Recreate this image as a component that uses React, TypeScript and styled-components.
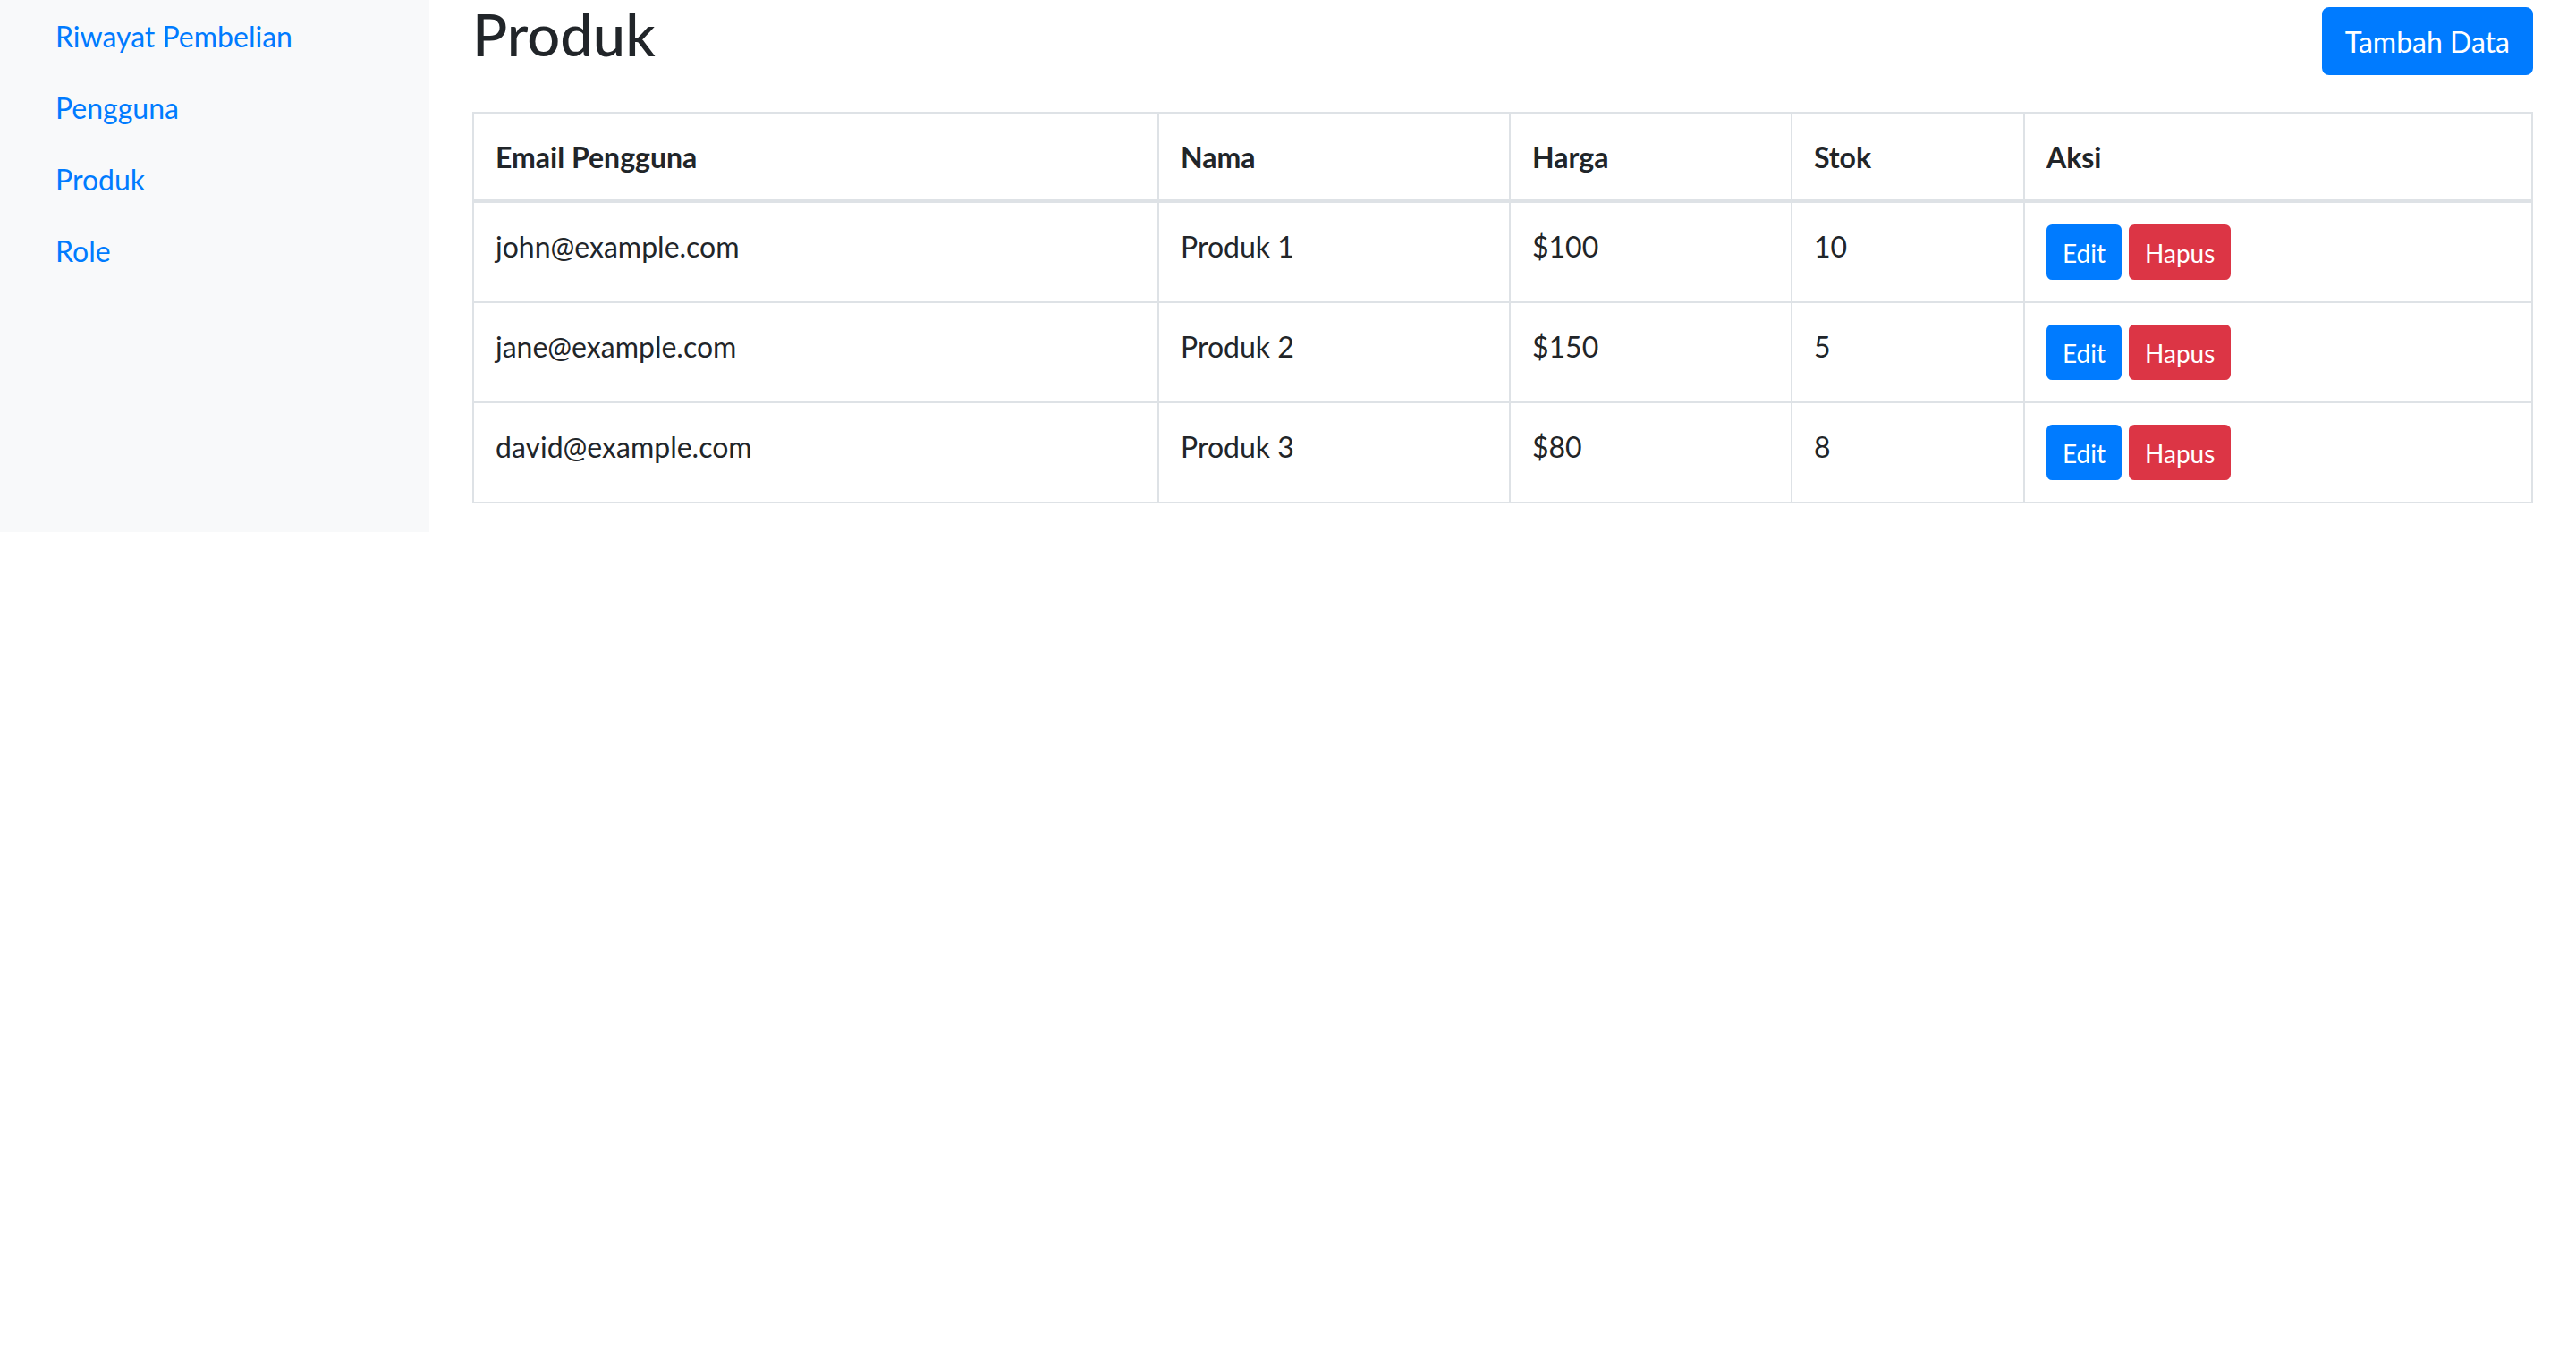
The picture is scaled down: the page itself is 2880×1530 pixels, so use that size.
import React from "react";
import styled, { createGlobalStyle } from "styled-components";

const GlobalStyle = createGlobalStyle`
  html, body {
    margin: 0;
    padding: 0;
    background: #ffffff;
  }
  body {
    font-family: Lato, "Open Sans", "Liberation Sans", sans-serif;
    color: #212529;
    font-size: 32px;
    line-height: 48px;
  }
  * { box-sizing: border-box; }
`;

const Layout = styled.div`
  display: flex;
  align-items: stretch;
  width: 100%;
`;

const Sidebar = styled.nav`
  flex: 0 0 480px;
  width: 480px;
  background: #f8f9fa;
  padding: 0 30px;
`;

const NavList = styled.ul`
  list-style: none;
  margin: 0;
  padding: 0;
  display: flex;
  flex-direction: column;
`;

const NavLink = styled.a`
  display: block;
  padding: 17px 32px 15px;
  font-size: 32px;
  line-height: 48px;
  color: #007bff;
  text-decoration: none;
`;

const Main = styled.main`
  flex: 1 1 auto;
  min-width: 0;
  padding: 0 48px;
`;

const Header = styled.div`
  display: flex;
  justify-content: space-between;
  align-items: flex-start;
  margin-bottom: 32px;
`;

const Title = styled.h2`
  margin: 0 0 16px;
  font-size: 65px;
  font-weight: 500;
  line-height: 76.8px;
  color: #212529;
`;

const AddButton = styled.button`
  margin-top: 8px;
  height: 76px;
  padding: 1px 24px 0;
  font-family: inherit;
  font-size: 32px;
  line-height: 48px;
  font-weight: 400;
  color: #ffffff;
  background: #007bff;
  border: 2px solid #007bff;
  border-radius: 8px;
  cursor: pointer;
`;

const Table = styled.table`
  width: 100%;
  table-layout: fixed;
  border-collapse: collapse;
  border: 2px solid #dee2e6;
  margin-bottom: 32px;
  color: #212529;
`;

const Col = styled.col<{ $w?: number }>`
  width: ${(p) => (p.$w ? `${p.$w}px` : "auto")};
`;

const Th = styled.th`
  padding: 25px 24px 23px;
  border: 2px solid #dee2e6;
  border-bottom-width: 4px;
  text-align: left;
  vertical-align: bottom;
  font-size: 32px;
  line-height: 48px;
  font-weight: 700;
`;

const Td = styled.td`
  padding: 25px 24px 23px;
  border: 2px solid #dee2e6;
  text-align: left;
  vertical-align: top;
  font-size: 32px;
  line-height: 48px;
  font-weight: 400;
`;

const Actions = styled.div`
  display: flex;
  gap: 8px;
  margin: -1px 0 1px;
`;

const ActionButton = styled.button<{ $variant: "primary" | "danger" }>`
  padding: 9px 16px 7px;
  font-family: inherit;
  font-size: 28px;
  line-height: 42px;
  font-weight: 400;
  color: #ffffff;
  background: ${(p) => (p.$variant === "primary" ? "#007bff" : "#dc3545")};
  border: 2px solid ${(p) => (p.$variant === "primary" ? "#007bff" : "#dc3545")};
  border-radius: 6.4px;
  cursor: pointer;
`;

const navItems = ["Riwayat Pembelian", "Pengguna", "Produk", "Role"];

const products = [
  { email: "john@example.com", name: "Produk 1", price: "$100", stock: "10" },
  { email: "jane@example.com", name: "Produk 2", price: "$150", stock: "5" },
  { email: "david@example.com", name: "Produk 3", price: "$80", stock: "8" },
];

export default function App() {
  return (
    <>
      <GlobalStyle />
      <Layout>
        <Sidebar>
          <NavList>
            {navItems.map((item) => (
              <li key={item}>
                <NavLink href="#">{item}</NavLink>
              </li>
            ))}
          </NavList>
        </Sidebar>
        <Main>
          <Header>
            <Title>Produk</Title>
            <AddButton>Tambah Data</AddButton>
          </Header>
          <Table>
            <colgroup>
              <Col $w={766} />
              <Col $w={393} />
              <Col $w={315} />
              <Col $w={260} />
              <Col />
            </colgroup>
            <thead>
              <tr>
                <Th>Email Pengguna</Th>
                <Th>Nama</Th>
                <Th>Harga</Th>
                <Th>Stok</Th>
                <Th>Aksi</Th>
              </tr>
            </thead>
            <tbody>
              {products.map((p) => (
                <tr key={p.email}>
                  <Td>{p.email}</Td>
                  <Td>{p.name}</Td>
                  <Td>{p.price}</Td>
                  <Td>{p.stock}</Td>
                  <Td>
                    <Actions>
                      <ActionButton $variant="primary">Edit</ActionButton>
                      <ActionButton $variant="danger">Hapus</ActionButton>
                    </Actions>
                  </Td>
                </tr>
              ))}
            </tbody>
          </Table>
        </Main>
      </Layout>
    </>
  );
}
